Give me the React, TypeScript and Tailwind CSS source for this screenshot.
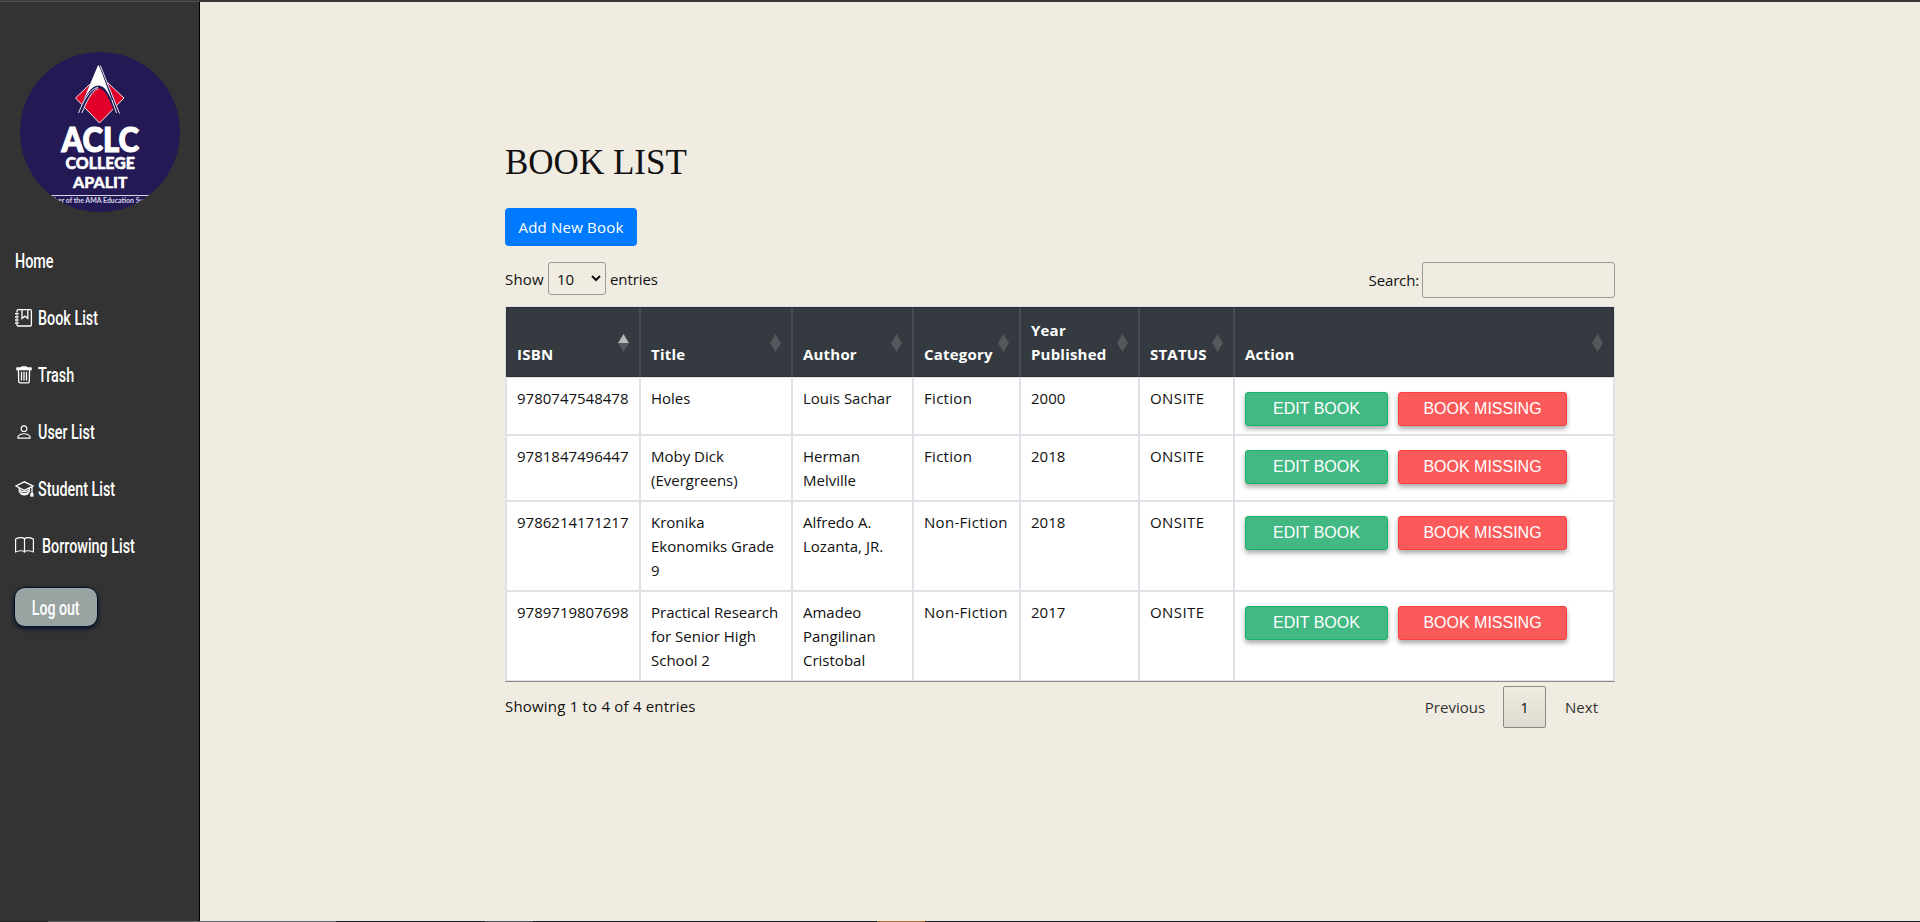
import type { ReactNode } from "react";
import { BsBook, BsPerson } from "react-icons/bs";

const line = { fill: "none", stroke: "#fff", strokeWidth: 1.3 } as const;

function JournalIcon() {
  return (
    <svg width="18" height="18" viewBox="0 0 18 18" {...line}>
      <path d="M2 3.500V1.800A1.200 1.200 0 0 1 3.200.7H15.200A1.200 1.200 0 0 1 16.400 1.900v13.900a1.200 1.200 0 0 1-1.200 1.200H3.200A1.200 1.200 0 0 1 2 15.800V15" />
      <path d="M2 6.300v1M2 9.300v1M2 12.300v1" />
      <path d="M0 4.800h3.600M0 7.900h3.600M0 11h3.600M0 14.100h3.600" strokeWidth="1.500" />
      <path d="M7 1v8.500l2.900-2.300 2.900 2.300V1" />
    </svg>
  );
}

function TrashIcon() {
  return (
    <svg width="18" height="18" viewBox="0 0 18 18" {...line}>
      <path d="M1.800 1.200h4L6.600.2h4.800l.8 1h4l.6.7v2.400H1.200V1.900z" fill="#fff" stroke="none" />
      <path d="M3.400 4l.3 11.300a1.600 1.600 0 0 0 1.600 1.600h7.400a1.600 1.600 0 0 0 1.600-1.600L14.600 4" />
      <path d="M6.500 5.800v8.700M9 5.800v8.700M11.500 5.800v8.700" />
    </svg>
  );
}

function StudentIcon() {
  return (
    <svg width="19" height="18" viewBox="0 0 19 18" {...line}>
      <path d="M.8 6L9.300 1.800 17.900 6l-8.600 4.300zM17 6.500v7.500" />
      <path d="M4.200 8.100v1.500c2 2.600 8.200 2.600 10.200 0V8.100M4.200 10.400v1.300c2 2.600 8.200 2.600 10.200 0v-1.300M5 13.100c2 2.300 6.700 2.300 8.700 0" />
      <path d="M15.300 13h3.200v3.700h-3.200z" fill="#fff" stroke="none" />
    </svg>
  );
}

function Logo() {
  return (
    <svg width="160" height="160" viewBox="0 0 160 160" className="block">
      <defs>
        <clipPath id="disc">
          <circle cx="80" cy="80" r="80" />
        </clipPath>
      </defs>
      <g clipPath="url(#disc)" fontFamily="Lato, sans-serif" fill="#fff">
        <rect width="160" height="160" fill="#231a55" />
        <path d="M79.500 23L104 46 79.500 71 55.500 46z" fill="#e2002b" stroke="#fff" strokeWidth=".9" />
        <path d="M78.300 12.800L57.800 61h4.500C66 52 71 39 79 36c7 2 11 13 15.500 24.500h5L81 14z" fill="#231a55" />
        <path d="M78.200 12.800L60.500 55C66 43 71 33.500 78.500 33.500c7 0 11.500 10 16.500 23L80.500 17z" fill="#fff" />
        <path d="M58.500 61C63 50 69 37.500 78 35.200M62 61C66 51 71 39.500 78 36.500M92 48l4.500 13M80.300 13.500l19.200 48" fill="none" stroke="#fff" strokeWidth=".9" />
        <g stroke="#fff">
          <text x="41.500" y="99.500" fontSize="34" fontWeight="900" strokeWidth="1.200" textLength="77.500" lengthAdjust="spacingAndGlyphs">ACLC</text>
          <text x="45.500" y="117.300" fontSize="16.200" fontWeight="900" strokeWidth=".5" textLength="69.500" lengthAdjust="spacingAndGlyphs">COLLEGE</text>
          <text x="53" y="135.700" fontSize="15.500" fontWeight="900" strokeWidth=".4" textLength="54.500" lengthAdjust="spacingAndGlyphs">APALIT</text>
        </g>
        <rect x="20" y="143" width="120" height="1" fill="#d9d6e6" />
        <text x="18" y="150.500" fontSize="6.500" fontWeight="700" textLength="120" lengthAdjust="spacingAndGlyphs" fill="#d9d6e6">Member of the AMA Education System</text>
      </g>
    </svg>
  );
}

function NavItem({ icon, label, gap = "" }: { icon?: ReactNode; label: string; gap?: string }) {
  return (
    <a className="flex h-[57px] items-center">
      {icon && <span className={`flex w-[23px] shrink-0 ${gap}`}>{icon}</span>}
      <span className="origin-left scale-x-[0.7] whitespace-nowrap font-[Roboto,sans-serif] text-[20.5px] font-medium leading-6">{label}</span>
    </a>
  );
}

function SortArrows({ asc = false }: { asc?: boolean }) {
  return (
    <svg width="11" height="18" viewBox="0 0 11 18" className="absolute right-[10px] top-[26px]">
      <path d="M5.500 0L11 9H0z" fill={asc ? "#b3b5b7" : "#54585c"} />
      <path d="M0 9h11L5.500 18z" fill="#54585c" />
    </svg>
  );
}

const headers = ["ISBN", "Title", "Author", "Category", "Year\nPublished", "STATUS", "Action"];

const spacing = ["", "", "", "tracking-[0.3px]", "", "tracking-[0.4px]"];

const books = [
  { h: "h-[58px]", cells: ["9780747548478", "Holes", "Louis Sachar", "Fiction", "2000", "ONSITE"] },
  { h: "h-[66px]", cells: ["9781847496447", "Moby Dick\n(Evergreens)", "Herman\nMelville", "Fiction", "2018", "ONSITE"] },
  { h: "h-[90px]", cells: ["9786214171217", "Kronika\nEkonomiks Grade\n9", "Alfredo A.\nLozanta, JR.", "Non-Fiction", "2018", "ONSITE"] },
  { h: "h-[90px]", cells: ["9789719807698", "Practical Research\nfor Senior High\nSchool 2", "Amadeo\nPangilinan\nCristobal", "Non-Fiction", "2017", "ONSITE"] },
];

export default function App() {
  return (
    <div className="flex h-[922px] w-[1920px] flex-col overflow-hidden bg-[#f0ece1] font-['Open_Sans',sans-serif] text-[15px] leading-6 text-[#111]">
      <div className="h-px shrink-0 bg-[#3b393b]" />
      <div className="flex min-h-0 flex-1">
        <aside className="flex w-[200px] shrink-0 flex-col border-r border-t border-r-black border-t-[#505050] bg-[#333] text-white">
          <div className="ml-5 mt-[50px] h-[160px] w-[160px]">
            <Logo />
          </div>
          <nav className="ml-[15px] mt-5 flex flex-col">
            <NavItem label="Home" />
            <NavItem icon={<JournalIcon />} label="Book List" />
            <NavItem icon={<TrashIcon />} label="Trash" />
            <NavItem icon={<BsPerson size={18} />} label="User List" />
            <NavItem icon={<StudentIcon />} label="Student List" />
            <NavItem icon={<BsBook size={19} />} gap="mr-1" label="Borrowing List" />
          </nav>
          <button className="ml-[14px] mt-[13px] flex h-10 w-[84px] items-center justify-center rounded-[11px] border border-[#05112b] bg-[#99a3a1] pt-[2px] shadow-[0_2px_4px_#05112b]">
            <span className="scale-x-[0.69] whitespace-nowrap font-[Roboto,sans-serif] text-[20.5px] font-medium leading-6">Log out</span>
          </button>
        </aside>

        <main className="flex flex-1 flex-col border-t border-[#3b393b] pl-[305px]">
          <div className="flex w-[1110px] flex-col">
            <h1 className="mt-[139px] h-11 font-['Liberation_Serif',serif] text-[35px] leading-[44px]">BOOK LIST</h1>
            <button className="mt-[23px] h-[38px] w-[132px] whitespace-nowrap rounded bg-[#007bff] tracking-[0.2px] text-white">Add New Book</button>
            <div className="mt-4 flex h-11 items-start justify-between">
              <div className="flex h-[33px] items-center">
                <span className="w-[43px] tracking-[0.2px]">Show</span>
                <span className="flex h-[33px] w-[58px] items-center justify-between rounded-[3px] border border-[#9a9a9a] pl-2 pr-1">
                  10
                  <svg width="10" height="7" viewBox="0 0 10 7" fill="none" stroke="#111" strokeWidth="2">
                    <path d="M1 1l4 4 4-4" />
                  </svg>
                </span>
                <span className="ml-1 tracking-[-0.1px]">entries</span>
              </div>
              <div className="flex h-9 items-center">
                <span className="mr-[3px] tracking-[-0.15px]">Search:</span>
                <span className="h-9 w-[193px] rounded-[3px] border border-[#9a9a9a]" />
              </div>
            </div>

            <div className="w-[1110px] border-b border-[#8f8d89]">
              <div className="border-x border-t border-[#dee2e6]">
                <table className="w-[1108px] table-fixed border-separate border-spacing-0 bg-white">
                  <colgroup>
                    <col className="w-[134px]" />
                    <col className="w-[152px]" />
                    <col className="w-[121px]" />
                    <col className="w-[107px]" />
                    <col className="w-[119px]" />
                    <col className="w-[95px]" />
                    <col className="w-[380px]" />
                  </colgroup>
                  <thead>
                    <tr className="h-[70px]">
                      {headers.map((h, i) => (
                        <th key={h} className="relative whitespace-pre border border-x-[#454d55] border-y-[#2b3036] bg-[#343a40] px-[10px] py-[10px] text-left align-bottom font-bold tracking-[0.2px] text-white first:border-l-[#2b3036] last:border-r-[#2b3036]">
                          {h}
                          <SortArrows asc={i === 0} />
                        </th>
                      ))}
                    </tr>
                  </thead>
                  <tbody>
                    {books.map((b) => (
                      <tr key={b.cells[0]} className={b.h}>
                        {b.cells.map((c, i) => (
                          <td key={i} className={`whitespace-pre border border-[#dee2e6] px-[10px] py-2 align-top ${spacing[i]}`}>{c}</td>
                        ))}
                        <td className="border border-[#dee2e6] px-[10px] pb-0 pt-[14px] align-top">
                          <div className="flex gap-[10px] font-['Liberation_Sans',sans-serif] text-base text-white">
                            <button className="h-[34px] w-[143px] rounded-[3px] border border-[#17b26a] bg-[#42b883] pb-px leading-[31px] shadow-[0_3px_5px_rgba(0,0,0,0.35)]">EDIT BOOK</button>
                            <button className="h-[34px] w-[169px] rounded-[3px] border border-[#fb4040] bg-[#fb5a5a] pb-px leading-[31px] shadow-[0_3px_5px_rgba(0,0,0,0.35)]">BOOK MISSING</button>
                          </div>
                        </td>
                      </tr>
                    ))}
                  </tbody>
                </table>
              </div>
            </div>

            <div className="flex justify-between">
              <span className="mt-3 tracking-[0.2px]">Showing 1 to 4 of 4 entries</span>
              <div className="mt-1 flex h-[42px] items-center text-[#333]">
                <span>Previous</span>
                <span className="ml-[18px] flex h-[42px] w-[43px] items-center justify-center rounded-[2px] border border-[#8b8983] bg-gradient-to-b from-[#efebe0] to-[#dfdbd0] text-[#111]">1</span>
                <span className="ml-[19px] mr-[17px]">Next</span>
              </div>
            </div>
          </div>
        </main>
      </div>
      <div className="flex h-px shrink-0 bg-[#222]">
        <span className="ml-12 w-72 bg-[#606060]" />
        <span className="ml-[149px] w-12 bg-[#555]" />
        <span className="ml-[344px] w-12 bg-[#a9692c]" />
      </div>
    </div>
  );
}
